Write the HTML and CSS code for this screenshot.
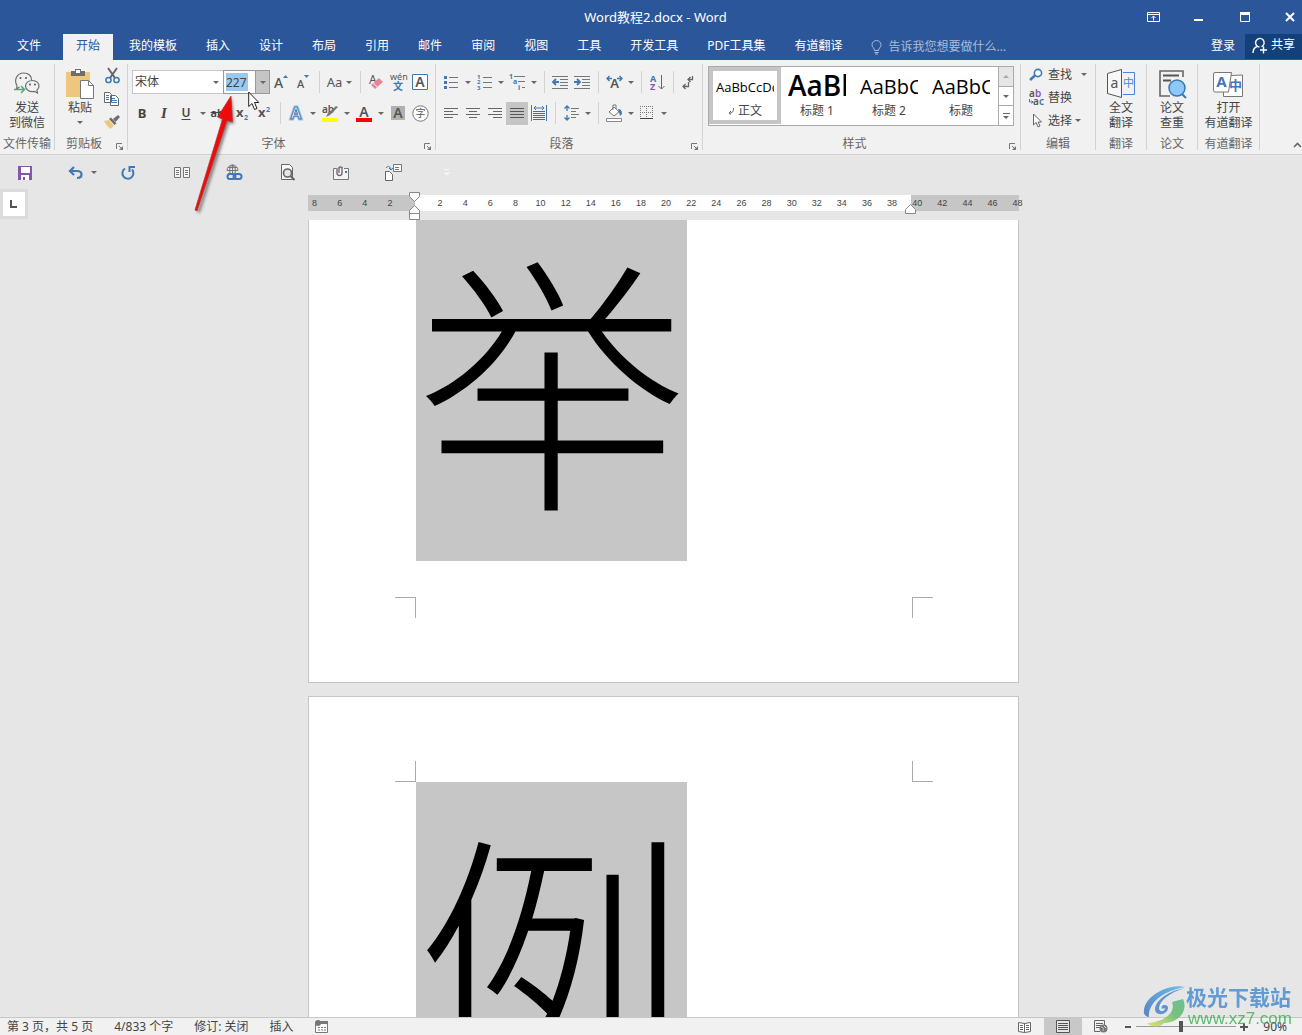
FILE: index.html
```html
<!DOCTYPE html>
<html lang="zh-CN">
<head>
<meta charset="utf-8">
<title>Word教程2.docx - Word</title>
<link rel="stylesheet" href="styles.css">
</head>
<body>
<div class="app">
  <header class="titlebar">
    <h1 class="title">Word教程2.docx - Word</h1>
    <div class="window-controls">
      <button class="win" aria-label="功能区显示选项"><svg width="13" height="10"><path d="M.5.5h12v9H.5zM0 2.500h13M6.500 8.500v-4M4.500 6l2-2 2 2" fill="none" stroke="#fff"/></svg></button>
      <button class="win" aria-label="最小化"><svg width="10" height="10"><path d="M0 7h9v2H0z" fill="#fff"/></svg></button>
      <button class="win" aria-label="最大化"><svg width="10" height="10"><path d="M.5.5h9v9H.5z" fill="none" stroke="#fff"/><path d="M0 0h10v3H0z" fill="#fff"/></svg></button>
      <button class="win win-close" aria-label="关闭"><svg width="10" height="10"><path d="M1 1l8 8M9 1l-8 8" stroke="#fff" stroke-width="2"/></svg></button>
    </div>
  </header>
  <nav class="tabs">
    <button class="tab tab-file">文件</button>
    <button class="tab tab-active">开始</button>
    <button class="tab">我的模板</button>
    <button class="tab">插入</button>
    <button class="tab">设计</button>
    <button class="tab">布局</button>
    <button class="tab">引用</button>
    <button class="tab">邮件</button>
    <button class="tab">审阅</button>
    <button class="tab">视图</button>
    <button class="tab">工具</button>
    <button class="tab">开发工具</button>
    <button class="tab">PDF工具集</button>
    <button class="tab">有道翻译</button>
    <label class="tellme">
      <svg width="11" height="15"><path d="M3.500 10.500C3.500 8 1 7.500 1 4.800a4.500 4.300 0 0 1 9 0c0 2.700-2.500 3.200-2.500 5.700zM3.500 12.500h4M4 14h3" fill="none" stroke="#a9bcd8"/></svg>
      <input class="tellme-input" type="text" placeholder="告诉我您想要做什么...">
    </label>
    <button class="login">登录</button>
    <button class="share"><svg width="16" height="17"><path d="M1 16c0-4 2-6 5-7M7.500 10a4.300 4.300 0 1 1 2-.3M8 13h7M11.500 9.500v7" fill="none" stroke="#fff" stroke-width="1.400"/></svg>共享</button>
  </nav>

  <section class="ribbon">
    <div class="group g-wechat">
      <div class="group-body center">
        <button class="big"><span class="big-icon"><svg width="26" height="24"><g fill="#f1f1f1" stroke="#6e6e6e" stroke-width="1.200"><path d="M3 13.500C-.5 8 3 1 9.500 1 15 1 18 4.500 17.500 8.500M3 13.500L2.500 17l3-2"/><path d="M18.500 8.500c4 0 6.500 2.600 6.500 5.500 0 1.800-1 3.200-2 4l.5 3-3-1.700c-5 1.200-9-1.500-9-5.300 0-3 3-5.500 7-5.500z"/></g><g fill="#555"><circle cx="6.500" cy="6" r="1"/><circle cx="12" cy="6" r="1"/><circle cx="16" cy="12.500" r="1"/><circle cx="21" cy="12.500" r="1"/></g><path d="M0 17.500h10M7 14l3.500 3.500L7 21" fill="none" stroke="#55a679" stroke-width="1.500"/></svg></span>发送<br>到微信</button>
      </div>
      <div class="group-foot"><span class="group-name">文件传输</span></div>
    </div>

    <div class="group g-clip">
      <div class="group-body">
        <button class="big"><span class="big-icon"><svg width="30" height="31"><path d="M1 4h24v25H1z" fill="#edc77e"/><path d="M6 3h4V1h6v2h4v5H6z" fill="#6d6d6d"/><path d="M11 2h4v3h-4z" fill="#fff"/><path d="M15.500 12.500h8l5 5v13h-13z" fill="#fff" stroke="#777"/><path d="M23.500 12.500v5h5" fill="none" stroke="#777"/></svg></span>粘贴<i class="caret caret-under"></i></button>
        <div class="clip-side">
          <button class="tool" aria-label="剪切"><svg width="15" height="16"><path d="M3 0l7 10M12 0L5 10" stroke="#666" stroke-width="2"/><g fill="none" stroke="#3f78b5" stroke-width="1.500"><circle cx="3.500" cy="12" r="2.600"/><circle cx="11.500" cy="12" r="2.600"/></g></svg></button>
          <button class="tool" aria-label="复制"><svg width="16" height="14"><path d="M.5.5h5l2 2v8h-7zM6.500 3.500h5l3 3v7h-8z" fill="#fff" stroke="#666"/><path d="M2 3.500h3M2 5.500h3M2 7.500h3M8 6.500h3M8 8.500h5M8 10.500h5" stroke="#3f78b5"/></svg></button>
          <button class="tool" aria-label="格式刷"><svg width="16" height="14"><path d="M0 6l5-1 5 6-4 3c-2-3-4-4-6-8z" fill="#edc77e"/><path d="M5 4l2-1.500 5.500 6L10.500 10z" fill="#6d6d6d"/><path d="M9 4l5-4 2 2-4.500 5z" fill="#6d6d6d"/></svg></button>
        </div>
      </div>
      <div class="group-foot"><span class="group-name">剪贴板</span><button class="launcher" aria-label="剪贴板选项"><svg width="8" height="8"><path d="M.5 6V.5H6M3 3l3 3" fill="none" stroke="#777"/><path d="M7 3v4H3z" fill="#777"/></svg></button></div>
    </div>

    <div class="group g-font">
      <div class="group-body rows">
        <div class="row">
          <span class="combo combo-font"><input class="combo-input" type="text" value="宋体" aria-label="字体"><button class="combo-btn" aria-label="字体列表"><i class="caret"></i></button></span>
          <span class="combo combo-size"><input class="combo-input size-input" type="text" value="227" aria-label="字号"><button class="combo-btn combo-btn-on" aria-label="字号列表"><i class="caret"></i></button></span>
          <button class="tool" aria-label="增大字号"><svg width="14" height="16"><text x="0" y="14" font-size="14" font-weight="500" class="g">A</text><path d="M9 4l2.500-3L14 4z" fill="#3f78b5"/></svg></button>
          <button class="tool" aria-label="减小字号"><svg width="14" height="16"><text x="1" y="14" font-size="11" font-weight="500" class="g">A</text><path d="M8 1h5l-2.500 3z" fill="#3f78b5"/></svg></button>
          <i class="sep"></i>
          <button class="tool tool-wide">Aa<i class="caret"></i></button>
          <i class="sep"></i>
          <button class="tool" aria-label="清除格式"><svg width="16" height="16"><text x="1" y="10" font-size="12" class="g">A</text><path d="M3 11l8-7 4 4-8 7z" fill="#e8849a"/><path d="M5.500 9l4 4.500" stroke="#f1f1f1"/></svg></button>
          <button class="tool" aria-label="拼音指南"><svg width="17" height="18"><text x="0" y="7" font-size="9" class="g">wén</text><text x="3" y="17" font-size="10" class="b" font-weight="700">文</text></svg></button>
          <button class="tool" aria-label="字符边框"><svg width="16" height="16"><path d="M.5.5h15v15H.5z" fill="#fff" stroke="#3f78b5"/><text x="8" y="13" text-anchor="middle" font-size="14" font-weight="600" class="g">A</text></svg></button>
        </div>
        <div class="row">
          <button class="tool bold">B</button>
          <button class="tool italic">I</button>
          <button class="tool under">U</button><button class="arrow" aria-label="下划线样式"><i class="caret"></i></button>
          <button class="tool strike">abc</button>
          <button class="tool" aria-label="下标"><svg width="14" height="14"><text x="1" y="11" font-size="13" font-weight="700" class="g">x</text><text x="9" y="14" font-size="7" class="b" font-weight="700">2</text></svg></button>
          <button class="tool" aria-label="上标"><svg width="14" height="14"><text x="1" y="11" font-size="13" font-weight="700" class="g">x</text><text x="9" y="6" font-size="7" class="b" font-weight="700">2</text></svg></button>
          <i class="sep"></i>
          <button class="tool" aria-label="文本效果"><svg width="16" height="17"><text x="8" y="14" text-anchor="middle" font-size="16" font-weight="600" fill="#fff" stroke="#a9cbe9" stroke-width="3">A</text><text x="8" y="14" text-anchor="middle" font-size="16" font-weight="600" fill="#fff" stroke="#3f78b5">A</text></svg></button><button class="arrow" aria-label="文本效果列表"><i class="caret"></i></button>
          <button class="tool" aria-label="突出显示"><svg width="16" height="18"><text x="0" y="9" font-size="10" font-weight="600" class="g">ab</text><path d="M16 3l-8 8-4 2 2-4 8-7z" fill="#777"/><path d="M0 14h16v4H0z" fill="#ff0"/></svg></button><button class="arrow" aria-label="突出显示颜色"><i class="caret"></i></button>
          <button class="tool" aria-label="字体颜色"><svg width="16" height="18"><text x="8" y="13" text-anchor="middle" font-size="14" font-weight="600" class="g">A</text><path d="M0 14h16v4H0z" fill="#f00"/></svg></button><button class="arrow" aria-label="字体颜色列表"><i class="caret"></i></button>
          <button class="tool" aria-label="字符底纹"><svg width="14" height="14"><path d="M0 0h14v14H0z" fill="#b1b1b1"/><text x="7" y="12" text-anchor="middle" font-size="14" font-weight="600" class="g">A</text></svg></button>
          <button class="tool" aria-label="带圈字符"><svg width="17" height="17"><circle cx="8.500" cy="8.500" r="7.700" fill="#fff" stroke="#777"/><text x="8.500" y="12" text-anchor="middle" font-size="10" class="g">字</text></svg></button>
        </div>
      </div>
      <div class="group-foot"><span class="group-name">字体</span><button class="launcher" aria-label="字体选项"><svg width="8" height="8"><path d="M.5 6V.5H6M3 3l3 3" fill="none" stroke="#777"/><path d="M7 3v4H3z" fill="#777"/></svg></button></div>
    </div>

    <div class="group g-para">
      <div class="group-body rows">
        <div class="row">
          <button class="tool" aria-label="项目符号"><svg width="14" height="15"><path d="M5 2.500h9M5 7.500h9M5 12.500h9" stroke="#777"/><path d="M0 1h3v3H0zM0 6h3v3H0zM0 11h3v3H0z" fill="#3f78b5"/></svg></button><button class="arrow" aria-label="项目符号库"><i class="caret"></i></button>
          <button class="tool" aria-label="编号"><svg width="15" height="16"><path d="M6 3.500h9M6 8.500h9M6 13.500h9" stroke="#777"/><g class="b" font-size="6" font-weight="700"><text x="0" y="5">1</text><text x="0" y="10">2</text><text x="0" y="16">3</text></g></svg></button><button class="arrow" aria-label="编号库"><i class="caret"></i></button>
          <button class="tool" aria-label="多级列表"><svg width="17" height="16"><path d="M5 2.500h11M9 7.500h7M13 13.500h3" stroke="#777"/><g class="b" font-size="7" font-weight="700"><text x="0" y="5">1</text><text x="4" y="10">a</text><text x="9" y="16">i</text></g></svg></button><button class="arrow" aria-label="列表库"><i class="caret"></i></button>
          <i class="sep"></i>
          <button class="tool" aria-label="减少缩进量"><svg width="16" height="14"><path d="M0 1.500h16M8 4.500h8M8 7.500h8M8 10.500h8M0 13.500h16" stroke="#777"/><path d="M7 7H1M4 4L1 7l3 3" fill="none" stroke="#3f78b5" stroke-width="1.800"/></svg></button>
          <button class="tool" aria-label="增加缩进量"><svg width="16" height="14"><path d="M0 1.500h16M8 4.500h8M8 7.500h8M8 10.500h8M0 13.500h16" stroke="#777"/><path d="M0 7h6M3 4l3 3-3 3" fill="none" stroke="#3f78b5" stroke-width="1.800"/></svg></button>
          <i class="sep"></i>
          <button class="tool" aria-label="中文版式"><svg width="17" height="14"><text x="8.500" y="13" text-anchor="middle" font-size="13" font-weight="600" class="g">A</text><path d="M6 3.500H1M3.500 1L1 3.500 3.500 6M11 3.500h5M13.500 1L16 3.500 13.500 6" fill="none" stroke="#3f78b5" stroke-width="1.400"/></svg></button><button class="arrow" aria-label="中文版式列表"><i class="caret"></i></button>
          <i class="sep"></i>
          <button class="tool" aria-label="排序"><svg width="15" height="17"><text x="0" y="8" font-size="9" class="b" font-weight="700">A</text><text x="0" y="16" font-size="9" font-weight="700" fill="#8a55a8">Z</text><path d="M11.500 1v14M8.500 12l3 3 3-3" fill="none" stroke="#666"/></svg></button>
          <i class="sep"></i>
          <button class="tool" aria-label="显示编辑标记"><svg width="12" height="13"><path d="M9.500 0v3.500H5M7.500 1L5 3.500 7.500 6M5.500 6v4.500H0M2.500 8L0 10.500 2.500 13" fill="none" stroke="#666" stroke-width="1.300"/></svg></button>
        </div>
        <div class="row">
          <button class="tool" aria-label="左对齐"><svg width="14" height="12"><path d="M0 1.500h14M0 4.500h9M0 7.500h14M0 10.500h9" stroke="#666"/></svg></button>
          <button class="tool" aria-label="居中"><svg width="14" height="12"><path d="M0 1.500h14M3 4.500h8M0 7.500h14M3 10.500h8" stroke="#666"/></svg></button>
          <button class="tool" aria-label="右对齐"><svg width="14" height="12"><path d="M0 1.500h14M5 4.500h9M0 7.500h14M5 10.500h9" stroke="#666"/></svg></button>
          <button class="tool tool-on" aria-label="两端对齐"><svg width="14" height="12"><path d="M0 1.500h14M0 4.500h14M0 7.500h14M0 10.500h14" stroke="#555"/></svg></button>
          <button class="tool" aria-label="分散对齐"><svg width="16" height="16"><path d="M.5 0v16M15.500 0v16M3 3h10M5 1L3 3l2 2M11 1l2 2-2 2" fill="none" stroke="#3f78b5"/><path d="M2 6.500h12M2 8.500h12M2 10.500h12M2 12.500h12M2 14.500h12" stroke="#666"/></svg></button>
          <i class="sep"></i>
          <button class="tool" aria-label="行距"><svg width="15" height="16"><path d="M7 3.500h8M7 6.500h5M7 9.500h8M7 12.500h5" stroke="#777"/><path d="M3 1v5M.5 3.500L3 1l2.500 2.500M3 15v-5M.5 12.500L3 15l2.500-2.500" fill="none" stroke="#3f78b5" stroke-width="1.300"/></svg></button><button class="arrow" aria-label="行距列表"><i class="caret"></i></button>
          <i class="sep"></i>
          <button class="tool" aria-label="底纹"><svg width="17" height="17"><path d="M3 7l5-5 5 5-5 4zM7 5V0h3v4" fill="#fff" stroke="#777"/><path d="M12 4c3 0 4 2 4 5l-2 2-1-4z" fill="#3f78b5"/><path d="M.5 13.500h15v3H.5z" fill="#fff" stroke="#888"/></svg></button><button class="arrow" aria-label="底纹颜色"><i class="caret"></i></button>
          <button class="tool" aria-label="边框"><svg width="14" height="14"><path d="M.5 0v13M6.500 0v13M12.500 0v13M0 .5h13M0 6.500h13" stroke="#777" stroke-dasharray="1 1"/><path d="M0 12.500h13" stroke="#444"/></svg></button><button class="arrow" aria-label="边框列表"><i class="caret"></i></button>
        </div>
      </div>
      <div class="group-foot"><span class="group-name">段落</span><button class="launcher" aria-label="段落选项"><svg width="8" height="8"><path d="M.5 6V.5H6M3 3l3 3" fill="none" stroke="#777"/><path d="M7 3v4H3z" fill="#777"/></svg></button></div>
    </div>

    <div class="group g-style">
      <div class="group-body">
        <div class="gallery">
          <button class="style style-on"><span class="sample">AaBbCcDd</span><span class="style-name"><svg width="6" height="7"><path d="M5.500 0c0 4-1 5-4.500 5M3 3L1 5l2 1.500" fill="none" stroke="#666"/></svg> 正文</span></button>
          <button class="style"><span class="sample sample-h1">AaBb</span><span class="style-name">标题 1</span></button>
          <button class="style"><span class="sample sample-h2">AaBbC</span><span class="style-name">标题 2</span></button>
          <button class="style"><span class="sample sample-h2">AaBbC</span><span class="style-name">标题</span></button>
          <div class="gallery-scroll">
            <button class="gs gs-off" aria-label="上一行"><i class="caret caret-up"></i></button>
            <button class="gs" aria-label="下一行"><i class="caret"></i></button>
            <button class="gs" aria-label="其他"><i class="bar"></i><i class="caret"></i></button>
          </div>
        </div>
      </div>
      <div class="group-foot"><span class="group-name">样式</span><button class="launcher" aria-label="样式选项"><svg width="8" height="8"><path d="M.5 6V.5H6M3 3l3 3" fill="none" stroke="#777"/><path d="M7 3v4H3z" fill="#777"/></svg></button></div>
    </div>

    <div class="group g-edit">
      <div class="group-body edit-list">
        <button class="edit"><svg width="16" height="14"><circle cx="9" cy="5" r="3.600" fill="#fff" stroke="#3f78b5" stroke-width="1.600"/><path d="M6 7.500L1 12" stroke="#3f78b5" stroke-width="2.500"/></svg>查找<i class="caret caret-far"></i></button>
        <button class="edit"><svg width="16" height="16"><g font-size="10" font-weight="600"><text x="0" y="7" class="g">a</text><text x="6" y="7" fill="#8a55a8">b</text><text x="4" y="15" class="g">a</text><text x="10" y="15" class="b">c</text></g><path d="M.5 9v3H4M2.500 10.500L4 12l-1.500 1.500" fill="none" stroke="#3f78b5"/></svg>替换</button>
        <button class="edit"><svg width="16" height="15"><path d="M4.500 1v11l2.700-2.500L9 14l2-1-2-4h3.500z" fill="#fff" stroke="#666"/></svg>选择<i class="caret"></i></button>
      </div>
      <div class="group-foot"><span class="group-name">编辑</span></div>
    </div>

    <div class="group g-trans">
      <div class="group-body center">
        <button class="big"><span class="big-icon"><svg width="29" height="29"><path d="M.5 4.500l14-4v28l-14-4z" fill="#f8f8f8" stroke="#555"/><text x="7.500" y="19" text-anchor="middle" font-size="14" class="g">a</text><path d="M16 3.500h11.500v22H16" fill="none" stroke="#4a86d8"/><text x="21.500" y="18" text-anchor="middle" font-size="11" fill="#4a86d8">中</text></svg></span>全文<br>翻译</button>
      </div>
      <div class="group-foot"><span class="group-name">翻译</span></div>
    </div>
    <div class="group g-trans">
      <div class="group-body center">
        <button class="big"><span class="big-icon"><svg width="29" height="31"><path d="M25 9V3H2v25h10" fill="none" stroke="#666" stroke-width="1.600"/><path d="M5 7.500h16M5 12.500h8" stroke="#555" stroke-width="2"/><circle cx="19" cy="20" r="8" fill="#8fc6fb" stroke="#3579ad" stroke-width="1.500"/><path d="M24 26l4 4" stroke="#3579ad" stroke-width="2"/></svg></span>论文<br>查重</button>
      </div>
      <div class="group-foot"><span class="group-name">论文</span></div>
    </div>
    <div class="group g-youdao">
      <div class="group-body center">
        <button class="big"><span class="big-icon"><svg width="30" height="26"><path d="M18 4.500l11.500-.5v21.500H10.500V21" fill="#fff" stroke="#777"/><path d="M2 1.500h16.500L15.500 21H2Q.5 21 .5 19.500V3Q.5 1.500 2 1.500z" fill="#fff" stroke="#777"/><text x="8.500" y="16" text-anchor="middle" font-size="15" font-weight="700" class="b">A</text><text x="22.500" y="19" text-anchor="middle" font-size="13" font-weight="700" class="b">中</text></svg></span>打开<br>有道翻译</button>
      </div>
      <div class="group-foot"><span class="group-name">有道翻译</span></div>
    </div>
    <button class="collapse" aria-label="折叠功能区"><svg width="9" height="6"><path d="M1 5l3.500-3.500L8 5" fill="none" stroke="#666" stroke-width="1.600"/></svg></button>
  </section>

  <div class="quick">
    <button class="q q-first" aria-label="保存"><svg width="14" height="14"><path d="M0 0h14v14H0z" fill="#8557a8"/><path d="M3 1h9v6H3zM3 9h8v5H3z" fill="#fff"/><path d="M5 11h2v3H5z" fill="#8557a8"/></svg></button>
    <button class="q q-undo" aria-label="撤销"><svg width="15" height="13"><path d="M1 5h8c6 0 6 7 0 7M6 1L2 5l4 4" fill="none" stroke="#3f78b5" stroke-width="2.200"/></svg><i class="caret"></i></button>
    <button class="q" aria-label="重复"><svg width="15" height="14"><path d="M4 2.500a5.500 5.500 0 1 0 7 1" fill="none" stroke="#3f78b5" stroke-width="2"/><path d="M8.500 0v6M8 1h6" stroke="#3f78b5" stroke-width="2"/></svg></button>
    <button class="q" aria-label="阅读"><svg width="16" height="12"><path d="M.5.5h6v10h-6zM9.500.5h6v10h-6z" fill="#f4f4f4" stroke="#777"/><path d="M2 3.500h3M2 5.500h3M2 7.500h3M11 3.500h3M11 5.500h3M11 7.500h3" stroke="#777"/></svg></button>
    <button class="q" aria-label="超链接"><svg width="17" height="17"><path d="M1 6.500a5.500 5.500 0 0 1 11 0M1 6.500h11M2 3.500h9M2 9.500h3M6.500 1v8M4 9C3 5 4 2 6.500 1 9 2 10 5 9 9" fill="none" stroke="#777"/><rect x="1.500" y="10" width="8" height="5" rx="2.500" fill="none" stroke="#3f78b5" stroke-width="2"/><rect x="7.500" y="10" width="8" height="5" rx="2.500" fill="none" stroke="#3f78b5" stroke-width="2"/></svg></button>
    <button class="q" aria-label="打印预览"><svg width="13" height="17"><path d="M.5.5h8l3 3v12H.5z" fill="#f8f8f8" stroke="#666"/><circle cx="6.500" cy="9" r="4" fill="#e6e6e6" stroke="#666" stroke-width="1.600"/><path d="M9.500 12l4 4" stroke="#666" stroke-width="2.200"/></svg></button>
    <button class="q" aria-label="邮件"><svg width="16" height="16"><path d="M3 3.500H.5v11h15v-11H11" fill="#f4f4f4" stroke="#777"/><path d="M4 3v5a2.500 2.500 0 0 0 5 0V2.500a2 2 0 0 0-3 0V8" fill="none" stroke="#666" stroke-width="1.300"/><path d="M12 6h2v2h-2z" fill="#3f78b5"/></svg></button>
    <button class="q" aria-label="发送"><svg width="17" height="17"><path d="M8.500.5h8v7h-8z" fill="#f8f8f8" stroke="#777"/><path d="M10 3.500h4M10 5.500h4" stroke="#777"/><path d="M.5 7.500h4l3 3v6h-7z" fill="#fff" stroke="#666"/><path d="M1 4c2-3 5-1 5 2M4 4l2 2 2-2" fill="none" stroke="#3f78b5"/></svg></button>
    <button class="q" aria-label="自定义快速访问工具栏"><svg width="6" height="7"><path d="M0 0h5v1H0zM0 3.500h6L3 6.500z" fill="#f8f8f8"/></svg></button>
  </div>

  <div class="rulerbar">
    <button class="tabstop" aria-label="制表符"><svg width="8" height="8"><path d="M1 0v7h6" fill="none" stroke="#555" stroke-width="2"/></svg></button>
    <div class="ruler">
      <div class="ticks"><span>8</span><span>6</span><span>4</span><span>2</span><span></span><span>2</span><span>4</span><span>6</span><span>8</span><span>10</span><span>12</span><span>14</span><span>16</span><span>18</span><span>20</span><span>22</span><span>24</span><span>26</span><span>28</span><span>30</span><span>32</span><span>34</span><span>36</span><span>38</span><span>40</span><span>42</span><span>44</span><span>46</span><span>48</span></div>
      <svg class="indent-left" width="11" height="28"><path d="M.5.5h10v4l-5 5-5-5zM.5 27.500v-9l5-5 5 5v9zM.5 21.500h10" fill="#fff" stroke="#888"/></svg>
      <svg class="indent-right" width="11" height="10"><path d="M.5 9.500v-4l5-5 5 5v4z" fill="#fff" stroke="#888"/></svg>
    </div>
  </div>

  <main class="workspace">
    <article class="page page-first">
      <p class="big-text"><span class="selected">举</span></p>
      <div class="marks marks-bottom"><i class="mark"></i><i class="mark mark-right"></i></div>
    </article>
    <article class="page page-next">
      <div class="marks marks-top"><i class="mark"></i><i class="mark mark-right"></i></div>
      <p class="big-text"><span class="selected">例</span></p>
    </article>
  </main>

  <footer class="status">
    <span>第 3 页，共 5 页</span><span>4/833 个字</span><span>修订: 关闭</span><span>插入</span>
    <svg width="13" height="13"><path d="M.5 3.500h12v9H.5z" fill="#fff" stroke="#777"/><path d="M5 1h8v3H5z" fill="#777"/><circle cx="3" cy="3" r="3" fill="#777"/><path d="M3 7.500h8M3 10h8" stroke="#777" stroke-dasharray="2 1"/></svg>
    <div class="views">
      <button class="view" aria-label="阅读视图"><svg width="14" height="12"><path d="M.5 1.500l6 1v9l-6-1zM12.500 1.500l-6 1v9l6-1z" fill="#fff" stroke="#666"/><path d="M2 4.500h3M2 6.500h3M2 8.500h3M8 4.500h3M8 6.500h3M8 8.500h3" stroke="#666"/></svg></button>
      <button class="view view-on" aria-label="页面视图"><svg width="14" height="13"><path d="M.5.5h13v12H.5z" fill="#e6e6e6" stroke="#555"/><path d="M2 3.500h10M2 5.500h10M2 7.500h10M2 9.500h10" stroke="#555"/></svg></button>
      <button class="view" aria-label="Web 版式视图"><svg width="14" height="13"><path d="M10.500 5V.5H.5v11H6M2 3.500h7M2 5.500h5M2 7.500h4" fill="none" stroke="#666"/><circle cx="9.500" cy="8.500" r="4" fill="#777"/><path d="M7 7l2 1v3M10 6l2 2" stroke="#ddd"/></svg></button>
    </div>
    <div class="zoom">
      <button class="zoom-btn" aria-label="缩小"><svg width="8" height="8"><path d="M1 3h6v2H1z" fill="#555"/></svg></button>
      <input class="zoom-range" type="range" min="10" max="190" value="90" aria-label="显示比例">
      <button class="zoom-btn" aria-label="放大"><svg width="8" height="8"><path d="M0 3h8v2H0zM3 0h2v8H3z" fill="#555"/></svg></button>
      <button class="zoom-value">90%</button>
    </div>
  </footer>

  <svg class="pointer-arrow" width="50" height="126"><defs><filter id="soft" x="-50%" y="-10%" width="200%" height="120%"><feGaussianBlur stdDeviation="1.500"/></filter></defs><path d="M6 120L34 29l-5-1L41 6l2 26-5-1L9 121z" fill="#666" filter="url(#soft)" opacity=".8"/><path d="M4 118L31.500 27l-5-2L40 4l1.500 26-5.500-1.500L6 119z" fill="#f00b0b" stroke="#a33" stroke-width=".7"/></svg>
  <svg class="cursor" width="12" height="19"><path d="M.7 1v14.500l3.300-3 2.500 6 2.500-1-2.500-6h4.300z" fill="#fff" stroke="#222"/></svg>

  <aside class="watermark">
    <svg width="43" height="42" viewBox="0 0 43 42"><defs><linearGradient id="sky" x1="0" y1="1" x2="1" y2="0"><stop offset="0" stop-color="#4472ba"/><stop offset="1" stop-color="#50b7ea"/></linearGradient><linearGradient id="leaf" x1="0" y1="1" x2="1" y2="0"><stop offset="0" stop-color="#dfe05c"/><stop offset=".6" stop-color="#63bb6d"/><stop offset="1" stop-color="#55b987"/></linearGradient></defs><path d="M42 2C26-2 2 11 1 25c-1 4 2 7 5 7C5 21 15 7 42 2z" fill="url(#sky)"/><path d="M42 3C25 6 13 15 12 24c0 6 8 7 12 2 2-3 1-6-2-6-3 0-4 2-3 4 1-1 3-1 3 0-1 3-6 3-6-1C17 15 26 8 42 3z" fill="#4a86cb"/><path d="M4 38c18-1 29-11 25-21l11-3c6 14-7 24-19 24-3 4-13 5-17 0z" fill="url(#leaf)"/></svg>
    <p class="wm-text"><span class="wm-name">极光下载站</span><span class="wm-url">www.xz7.com</span></p>
  </aside>
</div>
</body>
</html>
```
FILE: styles.css
```css
* { box-sizing: border-box; }
body {
  margin: 0;
  font: 12px/16px "Noto Sans", "Noto Sans CJK SC", sans-serif;
  color: #444;
  background: #e6e6e6;
}
button, input {
  font: inherit;
  color: inherit;
  margin: 0;
  padding: 0;
  border: 0;
  background: none;
}
p, h1 { margin: 0; }
svg { display: block; flex: none; overflow: visible; }
svg text { font-family: "Noto Sans", "Noto Sans CJK SC", sans-serif; }
svg .g { fill: #555; }
svg .b { fill: #3f78b5; }

.app {
  position: relative;
  display: flex;
  flex-direction: column;
  height: 100vh;
  overflow: hidden;
}

/* title bar and tabs */
.titlebar {
  display: grid;
  grid-template-columns: 1fr auto 1fr;
  align-items: center;
  height: 34px;
  background: #2b579a;
  color: #fff;
}
.title {
  grid-column: 2;
  padding-left: 9px;
  font-size: 13px;
  font-weight: 400;
}
.window-controls { display: flex; justify-content: flex-end; }
.win {
  display: flex;
  align-items: center;
  justify-content: center;
  width: 46px;
  height: 32px;
}
.win-close { width: 34px; padding-left: 10px; }
.tabs {
  display: flex;
  gap: 3px;
  height: 26px;
  background: #2b579a;
  color: #fff;
}
.tab { padding: 0 13px 3px; white-space: nowrap; }
.tab-file { padding-left: 17px; padding-right: 19px; }
.tab-active { background: #f1f1f1; color: #2b579a; }
.tellme {
  display: flex;
  flex: 1;
  align-items: center;
  gap: 6px;
  padding-left: 13px;
  color: #a9bcd8;
}
.tellme-input { width: 100%; }
.tellme-input::placeholder { color: #a9bcd8; opacity: 1; }
.login { padding: 0 7px 3px; white-space: nowrap; }
.share {
  display: flex;
  align-items: center;
  gap: 3px;
  height: 25px;
  padding: 0 7px 3px;
  background: #14407a;
  white-space: nowrap;
}

/* ribbon */
.ribbon {
  display: flex;
  height: 95px;
  padding: 4px 0;
  background: #f1f1f1;
  border-bottom: 1px solid #d2d2d2;
}
.group {
  display: flex;
  flex-direction: column;
  flex: none;
  border-right: 1px solid #d2d2d2;
}
.g-wechat { width: 55px; }
.g-clip { width: 73px; }
.g-font { width: 308px; padding-left: 3px; }
.g-para { width: 267px; padding-left: 4px; }
.g-style { width: 318px; padding-left: 5px; }
.g-edit { width: 75px; }
.g-trans { width: 51px; }
.g-youdao { width: 62px; }
.group-body { display: flex; flex: 1; }
.center { justify-content: center; }
.group-foot {
  display: flex;
  align-items: center;
  height: 12px;
  color: #666;
}
.group-name { flex: 1; text-align: center; white-space: nowrap; }
.g-font .group-name, .g-para .group-name, .g-style .group-name { padding-right: 5px; }
.launcher { width: 14px; padding: 6px 0 0 3px; }
.big {
  align-self: flex-start;
  padding-top: 3px;
  line-height: 15px;
  text-align: center;
  white-space: nowrap;
}
.big-icon {
  display: flex;
  align-items: center;
  justify-content: center;
  height: 33px;
}
.caret {
  display: inline-block;
  flex: none;
  width: 0;
  border: 3px solid transparent;
  border-top-color: #666;
  border-bottom-width: 0;
}
.caret-under { display: block; width: 6px; margin: 6px auto 0; }
.caret-up {
  border-top-width: 0;
  border-bottom: 3px solid #aaa;
}
.g-clip .big { width: 38px; margin-left: 6px; }
.clip-side { display: flex; flex-direction: column; }
.clip-side .tool { width: 26px; }
.rows { flex-direction: column; gap: 1px; padding-top: 3px; }
.row { display: flex; align-items: center; height: 30px; }
.tool {
  display: flex;
  align-items: center;
  justify-content: center;
  flex: none;
  width: 22px;
  height: 23px;
}
.tool-wide { width: 31px; gap: 4px; font-size: 13px; color: #555; }
.tool-on { background: #c5c5c5; }
.arrow { display: flex; justify-content: center; width: 11px; }
.g-font .arrow { width: 12px; }
.sep {
  width: 10px;
  height: 22px;
  background: linear-gradient(#d2d2d2, #d2d2d2) center / 1px 100% no-repeat;
}
.bold { font-weight: 700; font-size: 13px; }
.italic { font-family: "Liberation Serif", serif; font-style: italic; font-size: 15px; font-weight: 700; }
.under { font-weight: 600; text-decoration: underline; text-underline-offset: 2px; }
.strike { font-size: 11px; font-weight: 600; text-decoration: line-through; }
.combo {
  display: flex;
  height: 24px;
  background: #fff;
  border: 1px solid #c6c6c6;
}
.combo-font { width: 92px; margin-left: 1px; }
.combo-size { width: 47px; border-color: #999; margin-left: -1px; }
.combo-input { flex: 1; min-width: 0; padding-left: 2px; }
.combo-btn {
  display: flex;
  align-items: center;
  justify-content: center;
  width: 14px;
}
.combo-btn-on { background: #c5c5c5; border-left: 1px solid #999; }
.size-input {
  flex: none;
  width: 22px;
  height: 18px;
  margin: 2px auto 2px 2px;
  padding: 0;
  background: #99c9ef;
}
.gallery {
  display: flex;
  height: 60px;
  margin-top: 2px;
  background: #fff;
  border: 1px solid #ababab;
}
.style {
  display: flex;
  flex-direction: column;
  width: 72px;
  padding: 4px 7px;
}
.style-on { height: 57px; padding: 0 3px; border: 4px solid #c5c5c5; }
.sample {
  width: 58px;
  height: 32px;
  overflow: hidden;
  font-family: "Open Sans", "Noto Sans", sans-serif;
  font-size: 14px;
  line-height: 32px;
  color: #000;
  text-align: left;
  white-space: nowrap;
}
.style-on .sample { font-size: 13px; }
.sample-h1 { font-size: 28px; line-height: 28px; font-weight: 600; }
.sample-h2 { font-size: 20px; }
.style-name {
  display: flex;
  align-items: center;
  justify-content: center;
  gap: 4px;
  width: 58px;
  white-space: nowrap;
}
.gallery-scroll { display: flex; flex-direction: column; width: 15px; margin-left: 1px; border-left: 1px solid #ababab; }
.gs {
  display: flex;
  flex: 1;
  flex-direction: column;
  align-items: center;
  justify-content: center;
  gap: 2px;
}
.gs + .gs { border-top: 1px solid #ababab; }
.gs-off { background: #e6e6e6; }
.bar { width: 7px; height: 1px; background: #666; }
.edit-list { flex-direction: column; }
.edit {
  display: flex;
  align-items: center;
  gap: 3px;
  height: 23px;
  padding: 0 0 2px 8px;
}
.caret-far { margin-left: 6px; }
.collapse { align-self: flex-end; margin-left: auto; }
.collapse svg { margin-bottom: 2px; }

/* quick access toolbar */
.quick { display: flex; height: 35px; }
.q {
  display: flex;
  align-items: center;
  justify-content: center;
  width: 53px;
}
.q-first { width: 50px; }
.q-undo { gap: 8px; width: 52px; padding-left: 12px; }

/* ruler */
.rulerbar { display: flex; height: 30px; }
.tabstop {
  display: flex;
  align-items: center;
  justify-content: center;
  width: 22px;
  height: 24px;
  margin: 2px 0 0 3px;
  background: #fff;
  outline: 3px solid #dcdcdc;
}
.ruler {
  position: relative;
  width: 711px;
  height: 16px;
  margin: 5px auto 0;
  background: linear-gradient(90deg, #c6c6c6 107px, #fff 107px, #fff 603px, #c6c6c6 603px);
}
.ticks {
  display: flex;
  margin: 0 -11px 0 -6px;
  font: 9px/16px "Liberation Sans", Arial, sans-serif;
}
.ticks span { flex: 1; text-align: center; }
.indent-left { position: absolute; left: 101px; top: -3px; }
.indent-right { position: absolute; left: 597px; top: 9px; }

/* document */
.workspace { flex: 1; min-height: 0; overflow: hidden; padding-left: 25px; }
.page {
  width: 711px;
  margin: 0 auto 13px;
  background: #fff;
  border: 1px solid #c6c6c6;
}
.page-first { border-top: 0; padding-bottom: 64px; }
.page-next { padding-top: 64px; }
.big-text {
  display: flex;
  padding-left: 107px;
  font-family: "Noto Sans CJK SC", sans-serif;
  font-size: 271px;
  font-weight: 300;
  color: #000;
}
.selected { height: 341px; line-height: 337px; background: #c6c6c6; }
.page-first .selected { line-height: 305px; }
.marks { display: flex; justify-content: space-between; padding: 0 85px 0 86px; }
.marks-bottom { padding-top: 36px; }
.mark { width: 21px; height: 21px; border: solid #ababab; border-width: 1px 1px 0 0; }
.mark-right { border-width: 1px 0 0 1px; }
.marks-top .mark { border-width: 0 1px 1px 0; }
.marks-top .mark-right { border-width: 0 0 1px 1px; }

/* status bar */
.status {
  display: flex;
  align-items: center;
  gap: 21px;
  height: 18px;
  padding-left: 7px;
  border-top: 1px solid #c6c6c6;
  background: #f1f1f1;
  white-space: nowrap;
}
.views { display: flex; margin-left: auto; }
.view {
  display: flex;
  align-items: center;
  justify-content: center;
  width: 38px;
  height: 17px;
}
.view-on { background: #c8c8c8; }
.zoom { display: flex; align-items: center; gap: 4px; margin-left: -17px; padding-right: 15px; }
.zoom-range {
  appearance: none;
  width: 100px;
  height: 16px;
  background: linear-gradient(#999, #999) center / 100% 1px no-repeat;
}
.zoom-range::-webkit-slider-thumb {
  appearance: none;
  width: 4px;
  height: 11px;
  background: #555;
}
.zoom-value { margin-left: 11px; }

/* overlays */
.pointer-arrow { position: absolute; left: 191px; top: 92px; }
.cursor { position: absolute; left: 248px; top: 91px; }
.watermark {
  position: absolute;
  right: 10px;
  bottom: 6px;
  display: flex;
  opacity: .85;
  pointer-events: none;
}
.wm-text { display: flex; flex-direction: column; }
.wm-name { font-size: 21px; line-height: 24px; font-weight: 700; color: #4c8fd0; }
.wm-url { padding-left: 2px; font: 17px/20px "Liberation Sans", Arial, sans-serif; color: #3fb35a; }
```
